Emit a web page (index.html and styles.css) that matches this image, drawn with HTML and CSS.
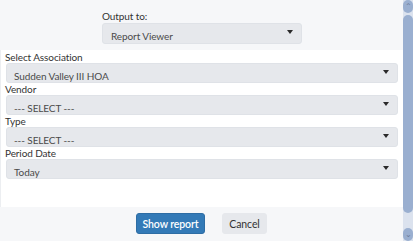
FILE: index.html
```html
<!DOCTYPE html>
<html>
<head>
<meta charset="utf-8">
<link rel="stylesheet" href="styles.css">
</head>
<body>
<div class="app">
  <div class="main">
    <div class="top">
      <label class="label">Output to:</label>
      <div class="select select-out"><span>Report Viewer</span><i class="arrow"></i></div>
    </div>
    <div class="panel">
      <label class="label">Select Association</label>
      <div class="select"><span>Sudden Valley III HOA</span><i class="arrow"></i></div>
      <label class="label">Vendor</label>
      <div class="select"><span>--- SELECT ---</span><i class="arrow"></i></div>
      <label class="label">Type</label>
      <div class="select"><span>--- SELECT ---</span><i class="arrow"></i></div>
      <label class="label">Period Date</label>
      <div class="select"><span>Today</span><i class="arrow"></i></div>
    </div>
    <div class="footer">
      <button class="btn btn-primary">Show report</button>
      <button class="btn btn-default">Cancel</button>
    </div>
  </div>
  <div class="scrollbar">
    <div class="sb-btn">&#8963;</div>
    <div class="sb-track"><div class="sb-thumb"></div></div>
    <div class="sb-btn">&#8964;</div>
  </div>
</div>
</body>
</html>
```

FILE: styles.css
```css
html, body {
  margin: 0;
  padding: 0;
  overflow: hidden;
  background: #f6f7f9;
}
body {
  font-family: "Lato", "Open Sans", sans-serif;
  font-size: 10px;
  letter-spacing: -0.1px;
  color: #333;
}
.app {
  display: flex;
  width: 413px;
  height: 241px;
}
.main {
  width: 403px;
  display: flex;
  flex-direction: column;
}
.top {
  height: 50px;
  box-sizing: border-box;
  padding: 10px 0 0 102px;
  display: flex;
  flex-direction: column;
}
.label {
  display: block;
  line-height: 12px;
  height: 12px;
}
.top .label {
  height: 13px;
}
.select {
  position: relative;
  box-sizing: border-box;
  height: 20px;
  margin-left: 1px;
  background: #e6e8ec;
  border: 1px solid #dfe2e7;
  border-radius: 3px;
  color: #4a4a4a;
  padding: 6px 0 0 7px;
  line-height: 12px;
  display: flex;
}
.select-out {
  width: 200px;
  height: 21px;
  margin-left: 0;
  padding-left: 8px;
}
.arrow {
  position: absolute;
  right: 8px;
  top: 6px;
  width: 0;
  height: 0;
  border-left: 3px solid transparent;
  border-right: 3px solid transparent;
  border-top: 4px solid #2a2a2a;
}
.panel {
  height: 157px;
  box-sizing: border-box;
  background: #fff;
  border-left: 1px solid #eceef1;
  padding: 1px 5px 0 4px;
  display: flex;
  flex-direction: column;
}
.footer {
  flex: 1;
  display: flex;
  justify-content: center;
  align-items: flex-start;
  gap: 17px;
  padding-top: 6px;
}
.btn {
  font-family: inherit;
  font-size: 10.5px;
  letter-spacing: -0.1px;
  height: 21px;
  border-radius: 3px;
  padding: 0;
  white-space: nowrap;
  cursor: pointer;
}
.btn-primary {
  width: 69px;
  background: #337ab7;
  border: 1px solid #2e6da4;
  color: #fff;
  font-weight: 600;
}
.btn-default {
  width: 45px;
  background: #e6e8ec;
  border: 1px solid #e6e8ec;
  color: #333;
}
.scrollbar {
  width: 10px;
  background: #dbe2ee;
  display: flex;
  flex-direction: column;
}
.sb-btn {
  height: 13px;
  background: #9aafd0;
  border-radius: 5px;
  color: #6c7c99;
  font-size: 8px;
  line-height: 13px;
  text-align: center;
  overflow: hidden;
}
.sb-track {
  flex: 1;
  padding: 2px 0 15px;
  display: flex;
}
.sb-thumb {
  flex: 1;
  background: #9aafd0;
  border-radius: 5px;
}
```
